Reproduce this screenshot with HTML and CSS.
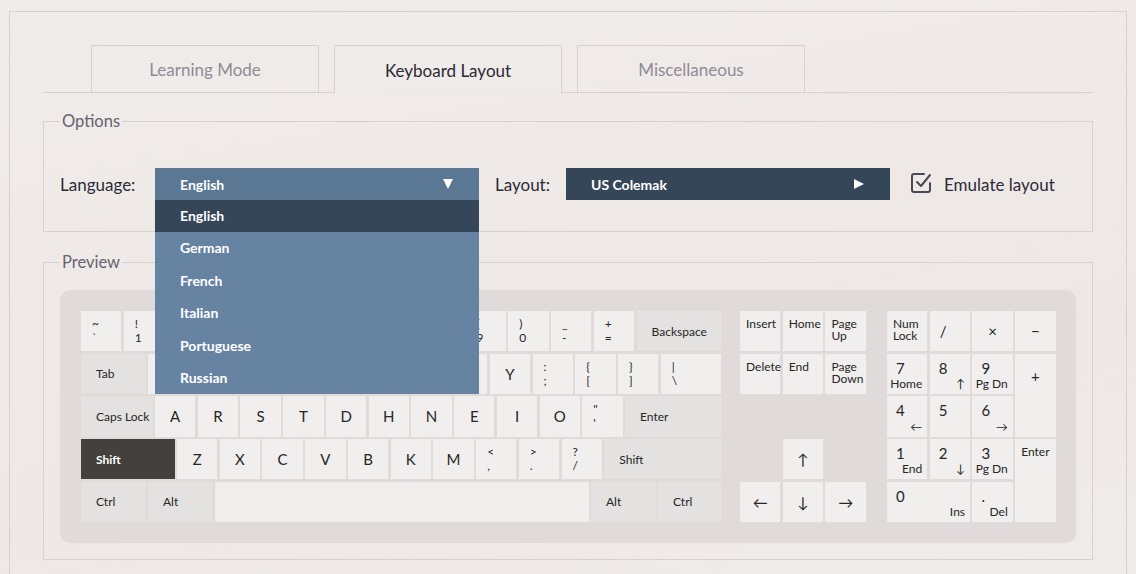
FILE: index.html
```html
<!DOCTYPE html>
<html lang="en">
<head>
<meta charset="utf-8">
<title>Keyboard Layout</title>
<link rel="stylesheet" href="styles.css">
</head>
<body>
<div class="frame">
  <div class="tabs">
    <div class="tab">Learning Mode</div>
    <div class="tab active">Keyboard Layout</div>
    <div class="tab">Miscellaneous</div>
  </div>

  <fieldset class="group options">
    <legend>Options</legend>
    <div class="opt-row">
      <span class="lbl lang-lbl">Language:</span>
      <div class="select-wrap">
        <div class="select lang"><span>English</span><span class="tri-down"></span></div>
        <ul class="menu">
          <li class="sel">English</li>
          <li>German</li>
          <li>French</li>
          <li>Italian</li>
          <li>Portuguese</li>
          <li>Russian</li>
        </ul>
      </div>
      <span class="lbl layout-lbl">Layout:</span>
      <div class="select layout"><span>US Colemak</span><span class="tri-right"></span></div>
      <div class="check">
        <svg width="24" height="24" viewBox="0 0 24 24" class="cbox">
          <path d="M15 3 H5 a2 2 0 0 0 -2 2 V19 a2 2 0 0 0 2 2 H19 a2 2 0 0 0 2 -2 V12" fill="none" stroke="#4a4855" stroke-width="2" stroke-linecap="round"/>
          <path d="M8 11 L12 15 L21 4" fill="none" stroke="#4a4855" stroke-width="2" stroke-linecap="round" stroke-linejoin="round"/>
        </svg>
        <span>Emulate layout</span>
      </div>
    </div>
  </fieldset>

  <fieldset class="group preview">
    <legend>Preview</legend>
    <div class="kbd">
      <div class="main">
        <div class="row">
          <div class="k dual"><span>~</span><span>`</span></div>
          <div class="k dual"><span>!</span><span>1</span></div>
          <div class="k dual"><span>@</span><span>2</span></div>
          <div class="k dual"><span>#</span><span>3</span></div>
          <div class="k dual"><span>$</span><span>4</span></div>
          <div class="k dual"><span>%</span><span>5</span></div>
          <div class="k dual"><span>^</span><span>6</span></div>
          <div class="k dual"><span>&amp;</span><span>7</span></div>
          <div class="k dual"><span>*</span><span>8</span></div>
          <div class="k dual"><span>(</span><span>9</span></div>
          <div class="k dual"><span>)</span><span>0</span></div>
          <div class="k dual"><span>_</span><span>-</span></div>
          <div class="k dual"><span>+</span><span>=</span></div>
          <div class="k mod fill">Backspace</div>
        </div>
        <div class="row">
          <div class="k mod w-tab">Tab</div>
          <div class="k ch">Q</div>
          <div class="k ch">W</div>
          <div class="k ch">F</div>
          <div class="k ch">P</div>
          <div class="k ch">G</div>
          <div class="k ch">J</div>
          <div class="k ch">L</div>
          <div class="k ch">U</div>
          <div class="k ch">Y</div>
          <div class="k dual"><span>:</span><span>;</span></div>
          <div class="k dual"><span>{</span><span>[</span></div>
          <div class="k dual"><span>}</span><span>]</span></div>
          <div class="k dual fill"><span>|</span><span>\</span></div>
        </div>
        <div class="row">
          <div class="k mod w-caps">Caps Lock</div>
          <div class="k ch">A</div>
          <div class="k ch">R</div>
          <div class="k ch">S</div>
          <div class="k ch">T</div>
          <div class="k ch">D</div>
          <div class="k ch">H</div>
          <div class="k ch">N</div>
          <div class="k ch">E</div>
          <div class="k ch">I</div>
          <div class="k ch">O</div>
          <div class="k dual"><span>"</span><span>'</span></div>
          <div class="k mod fill">Enter</div>
        </div>
        <div class="row">
          <div class="k mod w-shift on">Shift</div>
          <div class="k ch">Z</div>
          <div class="k ch">X</div>
          <div class="k ch">C</div>
          <div class="k ch">V</div>
          <div class="k ch">B</div>
          <div class="k ch">K</div>
          <div class="k ch">M</div>
          <div class="k dual"><span>&lt;</span><span>,</span></div>
          <div class="k dual"><span>&gt;</span><span>.</span></div>
          <div class="k dual"><span>?</span><span>/</span></div>
          <div class="k mod fill">Shift</div>
        </div>
        <div class="row">
          <div class="k mod w-15">Ctrl</div>
          <div class="k mod w-15">Alt</div>
          <div class="k space fill"></div>
          <div class="k mod w-15">Alt</div>
          <div class="k mod w-ctrl">Ctrl</div>
        </div>
      </div>

      <div class="nav">
        <div class="nk">Insert</div>
        <div class="nk">Home</div>
        <div class="nk">Page<br>Up</div>
        <div class="nk">Delete</div>
        <div class="nk">End</div>
        <div class="nk">Page<br>Down</div>
        <div class="ak up">↑</div>
        <div class="ak left">←</div>
        <div class="ak down">↓</div>
        <div class="ak right">→</div>
      </div>

      <div class="num">
        <div class="nk">Num<br>Lock</div>
        <div class="ck slash">/</div>
        <div class="ck">×</div>
        <div class="ck">−</div>
        <div class="dk"><span class="d">7</span><span class="s">Home</span></div>
        <div class="dk"><span class="d">8</span><span class="s">↑</span></div>
        <div class="dk"><span class="d">9</span><span class="s">Pg Dn</span></div>
        <div class="ck plus">+</div>
        <div class="dk"><span class="d">4</span><span class="s">←</span></div>
        <div class="dk"><span class="d">5</span><span class="s"></span></div>
        <div class="dk"><span class="d">6</span><span class="s">→</span></div>
        <div class="dk"><span class="d">1</span><span class="s">End</span></div>
        <div class="dk"><span class="d">2</span><span class="s">↓</span></div>
        <div class="dk"><span class="d">3</span><span class="s">Pg Dn</span></div>
        <div class="nk enter">Enter</div>
        <div class="dk zero"><span class="d">0</span><span class="s">Ins</span></div>
        <div class="dk"><span class="d">.</span><span class="s">Del</span></div>
      </div>
    </div>
  </fieldset>
</div>
</body>
</html>
```

FILE: styles.css
```css
:root {
  --kw: 40.35px;
  --kg: 2.4px;
  --kh: 40.3px;
  --rg: 2.37px;
  --line: #d7d1ce;
}

* { box-sizing: border-box; }

html, body {
  margin: 0;
  height: 100%;
}

body {
  font-family: "Lato", "Noto Sans", sans-serif;
  background: linear-gradient(170deg, #f0ecea 0%, #eee9e6 45%, #ede8e5 70%, #f0ecea 100%);
  color: #2c2b38;
  overflow: hidden;
}

.frame {
  margin: 11px 9px 0;
  height: 563px;
  border: 1px solid var(--line);
  border-bottom: none;
  padding: 33px 33px 0;
}

/* Tabs */
.tabs {
  display: flex;
  gap: 15px;
  padding-left: 48px;
  border-bottom: 1px solid var(--line);
  height: 48px;
}

.tab {
  width: 228px;
  height: 47px;
  border: 1px solid var(--line);
  border-bottom: none;
  display: flex;
  align-items: center;
  justify-content: center;
  padding-top: 1px;
  font-size: 17px;
  color: #8f8b96;
}

.tab.active {
  height: 48px;
  margin-bottom: -1px;
  background: #efebe8;
  color: #2a2934;
  position: relative;
}

/* Fieldsets */
.group {
  margin: 0;
  border: 1px solid var(--line);
  min-width: 0;
}

.group legend {
  padding: 0 2px;
  font-size: 16.5px;
  line-height: 20px;
  color: #66626f;
}

.options {
  margin-top: 18px;
  padding: 37px 16px 31px;
}

.preview {
  margin-top: 20px;
  padding: 18px 16px 16px;
}

.opt-row {
  display: flex;
  align-items: center;
  height: 32px;
}

.lbl {
  font-size: 17px;
  color: #2c2b38;
}

.lang-lbl { width: 95px; }
.layout-lbl { width: 71px; margin-left: 16px; }

.select-wrap {
  position: relative;
  width: 324px;
  height: 32px;
  z-index: 5;
}

.select {
  width: 324px;
  height: 32px;
  display: flex;
  align-items: center;
  justify-content: space-between;
  padding: 0 26px 0 25px;
  color: #fff;
  font-weight: 700;
  font-size: 14px;
}

.select.lang { background: #5a7794; }
.select.layout { background: #354658; }

.tri-down {
  width: 0;
  height: 0;
  border-left: 5.5px solid transparent;
  border-right: 5.5px solid transparent;
  border-top: 10px solid #fff;
}

.tri-right {
  width: 0;
  height: 0;
  border-top: 5px solid transparent;
  border-bottom: 5px solid transparent;
  border-left: 10px solid #fff;
}

.menu {
  position: absolute;
  top: 32px;
  left: 0;
  width: 324px;
  margin: 0;
  padding: 0;
  list-style: none;
  background: #6683a2;
}

.menu li {
  height: 32.4px;
  line-height: 32.4px;
  padding-left: 25px;
  color: #fff;
  font-weight: 700;
  font-size: 14px;
}

.menu li.sel { background: #354658; }

.check {
  display: flex;
  align-items: center;
  margin-left: 19px;
  font-size: 17px;
  color: #2c2b38;
}

.cbox { margin-right: 11px; margin-top: -2px; }

/* Keyboard */
.kbd {
  display: flex;
  align-items: flex-start;
  padding: 21px;
  background: #e0dbda;
  border-radius: 10px;
}

.main {
  display: flex;
  flex-direction: column;
  gap: var(--rg);
  width: 640px;
  flex: 0 0 640px;
}

.row {
  display: flex;
  gap: var(--kg);
  height: var(--kh);
}

.k {
  flex: 0 0 var(--kw);
  background: #f0efed;
  color: #262626;
  font-size: 12px;
  display: flex;
  align-items: center;
}

.k.mod {
  background: #e4e2e0;
  padding-left: 15px;
}

.k.on {
  background: #43403d;
  color: #fff;
  font-weight: 700;
}

.k.ch {
  justify-content: center;
  font-size: 15px;
}

.k.dual {
  flex-direction: column;
  align-items: flex-start;
  justify-content: center;
  padding-left: 11px;
  line-height: 14px;
}

.k.fill { flex: 1 1 0; }
.w-tab { flex-basis: 64.6px !important; }
.w-caps { flex-basis: 71.6px !important; }
.w-shift { flex-basis: 93.6px !important; }
.w-15 { flex-basis: 64.6px !important; }
.w-ctrl { flex-basis: 63px !important; }
.k.space { background: #efeeec; }

.nav, .num {
  display: grid;
  grid-template-rows: repeat(5, var(--kh));
  gap: var(--rg) var(--kg);
}

.nav {
  grid-template-columns: repeat(3, var(--kw));
  margin-left: 19px;
}

.num {
  grid-template-columns: repeat(4, var(--kw));
  margin-left: 21.15px;
}

.nk, .ak, .ck, .dk {
  background: #f0efed;
  color: #262626;
}

.nk {
  font-size: 12px;
  line-height: 12px;
  padding: 7px 6px;
}

.ak {
  display: flex;
  align-items: center;
  justify-content: center;
  font-size: 15px;
}

.ak.up { grid-row: 4; grid-column: 2; }
.ak.left { grid-row: 5; grid-column: 1; }
.ak.down { grid-row: 5; grid-column: 2; }
.ak.right { grid-row: 5; grid-column: 3; }

.ck {
  display: flex;
  align-items: center;
  justify-content: center;
  font-size: 15px;
}

.ck.slash {
  justify-content: flex-start;
  padding-left: 10px;
}

.ck.plus {
  grid-row: span 2;
  align-items: flex-start;
  padding-top: 13px;
}

.nk.enter { grid-row: span 2; }

.dk {
  display: flex;
  flex-direction: column;
  justify-content: space-between;
  padding: 6px 5px 4px 4px;
}

.dk .d {
  font-size: 15px;
  line-height: 16px;
  padding-left: 5px;
}

.dk .s {
  align-self: flex-end;
  font-size: 12px;
  line-height: 12px;
  min-height: 12px;
  white-space: nowrap;
}

.dk.zero { grid-column: span 2; }
```
